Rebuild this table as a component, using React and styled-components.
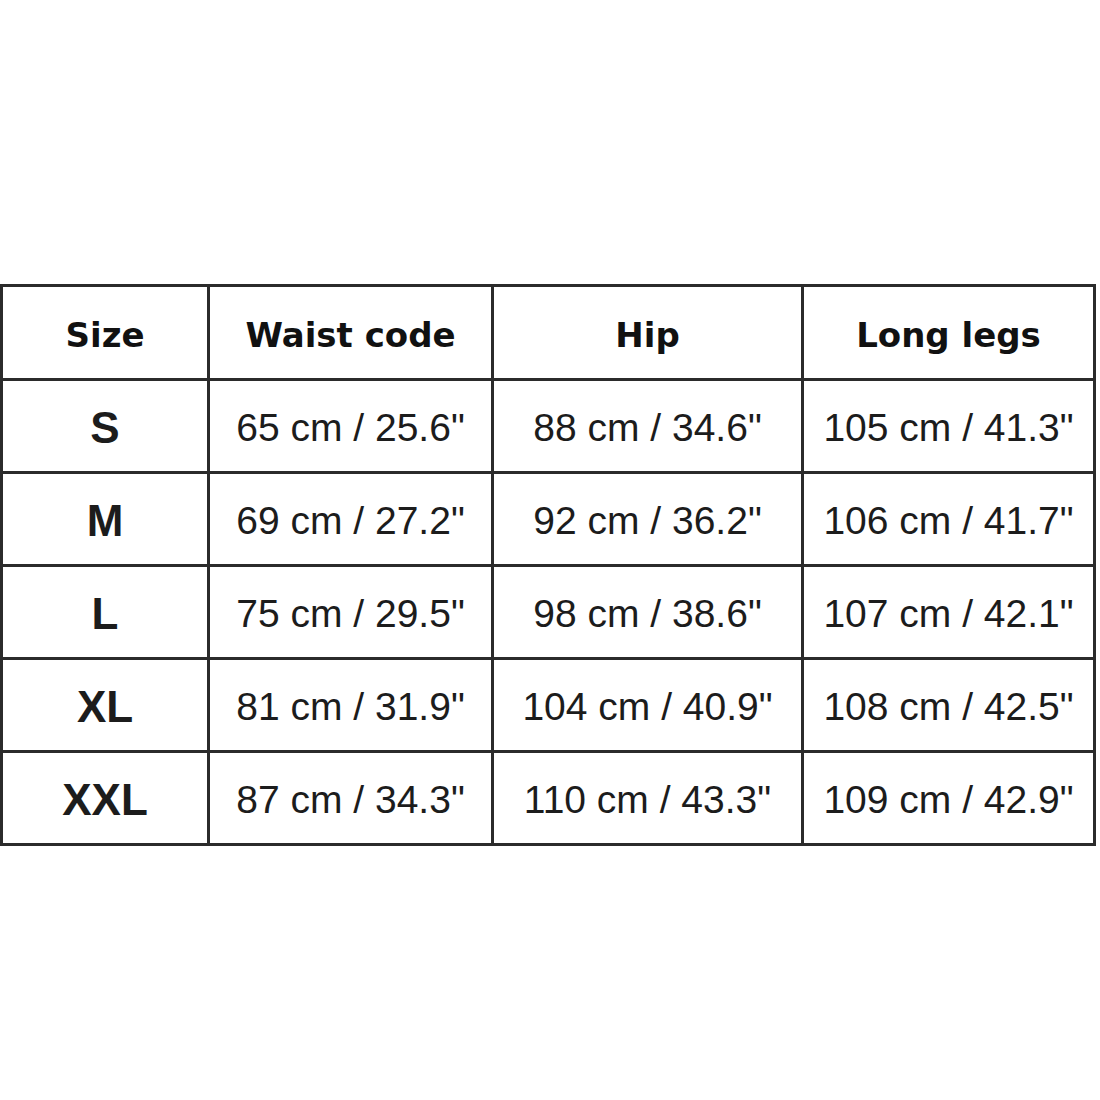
import styled, { createGlobalStyle } from "styled-components";

const GlobalStyle = createGlobalStyle`
  html, body {
    margin: 0;
    padding: 0;
    background: #fff;
  }
`;

const Page = styled.div`
  width: 1100px;
  height: 1100px;
  padding-top: 284px;
  box-sizing: border-box;
  background: #fff;
`;

const Table = styled.table`
  border-collapse: collapse;
  table-layout: fixed;
  width: 1093px;
  border: 3px solid #2b2b2b;
`;

const Col = styled.col`
  width: ${(p) => p.$w}px;
`;

const Cell = styled.td`
  border: 3px solid #2b2b2b;
  height: 93px;
  padding: 3px 0 0;
  box-sizing: border-box;
  text-align: center;
  vertical-align: middle;
  color: #1c1c1c;
  font-family: "Liberation Sans", Arial, sans-serif;
  font-size: ${(p) => (p.$bold ? 44 : 39)}px;
  font-weight: ${(p) => (p.$bold ? 700 : 400)};
  white-space: nowrap;
`;

const Head = styled.th`
  border: 3px solid #2b2b2b;
  height: 94px;
  padding: 5px 0 0;
  box-sizing: border-box;
  text-align: center;
  vertical-align: middle;
  color: #111;
  font-family: "DejaVu Sans", Verdana, sans-serif;
  font-size: 34px;
  font-weight: 700;
  white-space: nowrap;
`;

const widths = [207, 284, 310, 292];

const headers = ["Size", "Waist code", "Hip", "Long legs"];

const rows = [
  ["S", '65 cm / 25.6"', '88 cm / 34.6"', '105 cm / 41.3"'],
  ["M", '69 cm / 27.2"', '92 cm / 36.2"', '106 cm / 41.7"'],
  ["L", '75 cm / 29.5"', '98 cm / 38.6"', '107 cm / 42.1"'],
  ["XL", '81 cm / 31.9"', '104 cm / 40.9"', '108 cm / 42.5"'],
  ["XXL", '87 cm / 34.3"', '110 cm / 43.3"', '109 cm / 42.9"'],
];

export default function App() {
  return (
    <Page>
      <GlobalStyle />
      <Table>
        <colgroup>
          {widths.map((w, i) => (
            <Col key={i} $w={w} />
          ))}
        </colgroup>
        <thead>
          <tr>
            {headers.map((h) => (
              <Head key={h}>{h}</Head>
            ))}
          </tr>
        </thead>
        <tbody>
          {rows.map((r) => (
            <tr key={r[0]}>
              {r.map((v, i) => (
                <Cell key={i} $bold={i === 0}>
                  {v}
                </Cell>
              ))}
            </tr>
          ))}
        </tbody>
      </Table>
    </Page>
  );
}
